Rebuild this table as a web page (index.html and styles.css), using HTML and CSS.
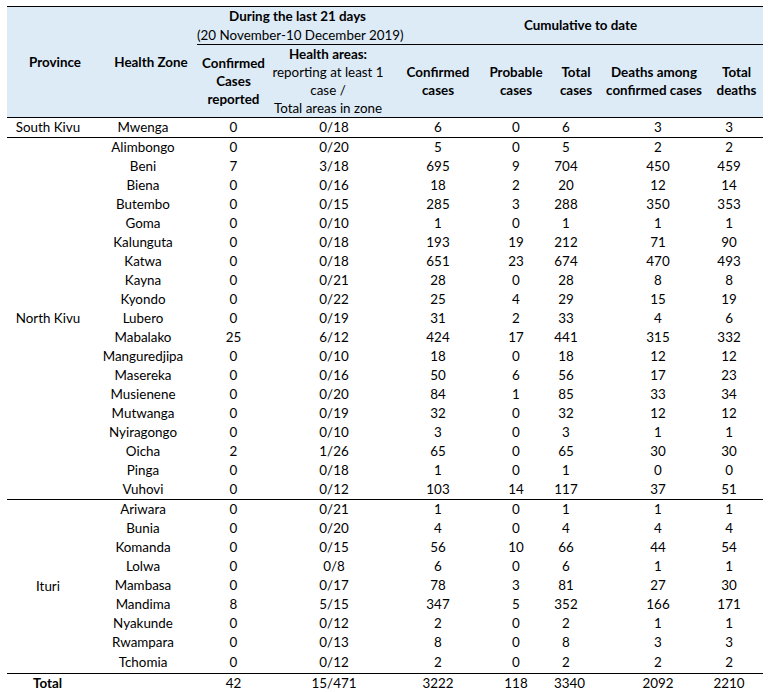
FILE: index.html
```html
<!DOCTYPE html>
<html lang="en">
<head>
<meta charset="utf-8">
<title>Ebola cases by health zone</title>
<link rel="stylesheet" href="styles.css">
</head>
<body>
<table class="cases">
  <colgroup>
    <col class="c-prov"><col class="c-zone"><col class="c-conf21"><col class="c-areas">
    <col class="c-conf"><col class="c-prob"><col class="c-total"><col class="c-deaths"><col class="c-tdeaths">
  </colgroup>
  <thead>
    <tr class="h1">
      <th rowspan="2" class="th-prov">Province</th>
      <th rowspan="2" class="th-zone">Health Zone</th>
      <th colspan="2" class="th-group">During the last 21 days<br><span class="normal">(20 November-10 December 2019)</span></th>
      <th colspan="5" class="th-group th-cum">Cumulative to date</th>
    </tr>
    <tr class="h2">
      <th>Confirmed<br>Cases<br>reported</th>
      <th class="th-areas">Health areas:<br><span class="normal">reporting at least 1<br>case /<br>Total areas in zone</span></th>
      <th>Confirmed<br>cases</th>
      <th>Probable<br>cases</th>
      <th>Total<br>cases</th>
      <th>Deaths among<br>confirmed cases</th>
      <th>Total<br>deaths</th>
    </tr>
  </thead>
  <tbody>
    <tr class="grp"><td class="prov">South Kivu</td><td>Mwenga</td><td>0</td><td>0/18</td><td>6</td><td>0</td><td>6</td><td>3</td><td>3</td></tr>

    <tr class="grp"><td class="prov" rowspan="19">North Kivu</td><td>Alimbongo</td><td>0</td><td>0/20</td><td>5</td><td>0</td><td>5</td><td>2</td><td>2</td></tr>
    <tr><td>Beni</td><td>7</td><td>3/18</td><td>695</td><td>9</td><td>704</td><td>450</td><td>459</td></tr>
    <tr><td>Biena</td><td>0</td><td>0/16</td><td>18</td><td>2</td><td>20</td><td>12</td><td>14</td></tr>
    <tr><td>Butembo</td><td>0</td><td>0/15</td><td>285</td><td>3</td><td>288</td><td>350</td><td>353</td></tr>
    <tr><td>Goma</td><td>0</td><td>0/10</td><td>1</td><td>0</td><td>1</td><td>1</td><td>1</td></tr>
    <tr><td>Kalunguta</td><td>0</td><td>0/18</td><td>193</td><td>19</td><td>212</td><td>71</td><td>90</td></tr>
    <tr><td>Katwa</td><td>0</td><td>0/18</td><td>651</td><td>23</td><td>674</td><td>470</td><td>493</td></tr>
    <tr><td>Kayna</td><td>0</td><td>0/21</td><td>28</td><td>0</td><td>28</td><td>8</td><td>8</td></tr>
    <tr><td>Kyondo</td><td>0</td><td>0/22</td><td>25</td><td>4</td><td>29</td><td>15</td><td>19</td></tr>
    <tr><td>Lubero</td><td>0</td><td>0/19</td><td>31</td><td>2</td><td>33</td><td>4</td><td>6</td></tr>
    <tr><td>Mabalako</td><td>25</td><td>6/12</td><td>424</td><td>17</td><td>441</td><td>315</td><td>332</td></tr>
    <tr><td>Manguredjipa</td><td>0</td><td>0/10</td><td>18</td><td>0</td><td>18</td><td>12</td><td>12</td></tr>
    <tr><td>Masereka</td><td>0</td><td>0/16</td><td>50</td><td>6</td><td>56</td><td>17</td><td>23</td></tr>
    <tr><td>Musienene</td><td>0</td><td>0/20</td><td>84</td><td>1</td><td>85</td><td>33</td><td>34</td></tr>
    <tr><td>Mutwanga</td><td>0</td><td>0/19</td><td>32</td><td>0</td><td>32</td><td>12</td><td>12</td></tr>
    <tr><td>Nyiragongo</td><td>0</td><td>0/10</td><td>3</td><td>0</td><td>3</td><td>1</td><td>1</td></tr>
    <tr><td>Oicha</td><td>2</td><td>1/26</td><td>65</td><td>0</td><td>65</td><td>30</td><td>30</td></tr>
    <tr><td>Pinga</td><td>0</td><td>0/18</td><td>1</td><td>0</td><td>1</td><td>0</td><td>0</td></tr>
    <tr><td>Vuhovi</td><td>0</td><td>0/12</td><td>103</td><td>14</td><td>117</td><td>37</td><td>51</td></tr>

    <tr class="grp"><td class="prov" rowspan="9">Ituri</td><td>Ariwara</td><td>0</td><td>0/21</td><td>1</td><td>0</td><td>1</td><td>1</td><td>1</td></tr>
    <tr><td>Bunia</td><td>0</td><td>0/20</td><td>4</td><td>0</td><td>4</td><td>4</td><td>4</td></tr>
    <tr><td>Komanda</td><td>0</td><td>0/15</td><td>56</td><td>10</td><td>66</td><td>44</td><td>54</td></tr>
    <tr><td>Lolwa</td><td>0</td><td>0/8</td><td>6</td><td>0</td><td>6</td><td>1</td><td>1</td></tr>
    <tr><td>Mambasa</td><td>0</td><td>0/17</td><td>78</td><td>3</td><td>81</td><td>27</td><td>30</td></tr>
    <tr><td>Mandima</td><td>8</td><td>5/15</td><td>347</td><td>5</td><td>352</td><td>166</td><td>171</td></tr>
    <tr><td>Nyakunde</td><td>0</td><td>0/12</td><td>2</td><td>0</td><td>2</td><td>1</td><td>1</td></tr>
    <tr><td>Rwampara</td><td>0</td><td>0/13</td><td>8</td><td>0</td><td>8</td><td>3</td><td>3</td></tr>
    <tr class="last"><td>Tchomia</td><td>0</td><td>0/12</td><td>2</td><td>0</td><td>2</td><td>2</td><td>2</td></tr>
  </tbody>
  <tfoot>
    <tr class="grp total"><td class="total-label">Total</td><td></td><td>42</td><td>15/471</td><td>3222</td><td>118</td><td>3340</td><td>2092</td><td>2210</td></tr>
  </tfoot>
</table>
</body>
</html>
```
FILE: styles.css
```css
html, body {
  margin: 0;
  padding: 0;
  background: #ffffff;
}

body {
  font-family: Lato, "Liberation Sans", Arial, sans-serif;
  font-size: 13.4px;
  color: #000000;
}

.cases {
  border-collapse: collapse;
  table-layout: fixed;
  width: 756px;
  margin: 6px 0 0 7px;
}

.c-prov    { width: 82px; }
.c-zone    { width: 108px; }
.c-conf21  { width: 73px; }
.c-areas   { width: 128px; }
.c-conf    { width: 80px; }
.c-prob    { width: 76px; }
.c-total   { width: 44px; }
.c-deaths  { width: 112px; }
.c-tdeaths { width: 53px; }

th, td {
  padding: 0;
  text-align: center;
  vertical-align: middle;
  white-space: nowrap;
}

thead th {
  background: #ddebf7;
  font-weight: bold;
}

.normal {
  font-weight: normal;
}

.h1 th {
  border-top: 1px solid #000000;
  height: 37px;
  line-height: 18.5px;
}

.h1 .th-group {
  border-bottom: 1px solid #000000;
}

.h2 th {
  height: 72px;
  line-height: 18px;
}

.th-prov { padding-left: 14px; }
.th-zone { padding-left: 16px; }
.th-areas { padding-right: 12px; }

td {
  height: 19px;
  line-height: 19px;
}

tr.last td {
  height: 21px;
}

.grp td {
  border-top: 1px solid #000000;
}

tbody tr td:nth-last-child(3),
tfoot tr td:nth-last-child(3) { padding-right: 20px; }
tbody tr td:nth-last-child(2),
tfoot tr td:nth-last-child(2) { padding-left: 8px; }
tbody tr td:nth-last-child(1),
tfoot tr td:nth-last-child(1) { padding-right: 15px; }

td.total-label {
  text-align: left;
  padding-left: 26px;
  font-weight: bold;
}
```
